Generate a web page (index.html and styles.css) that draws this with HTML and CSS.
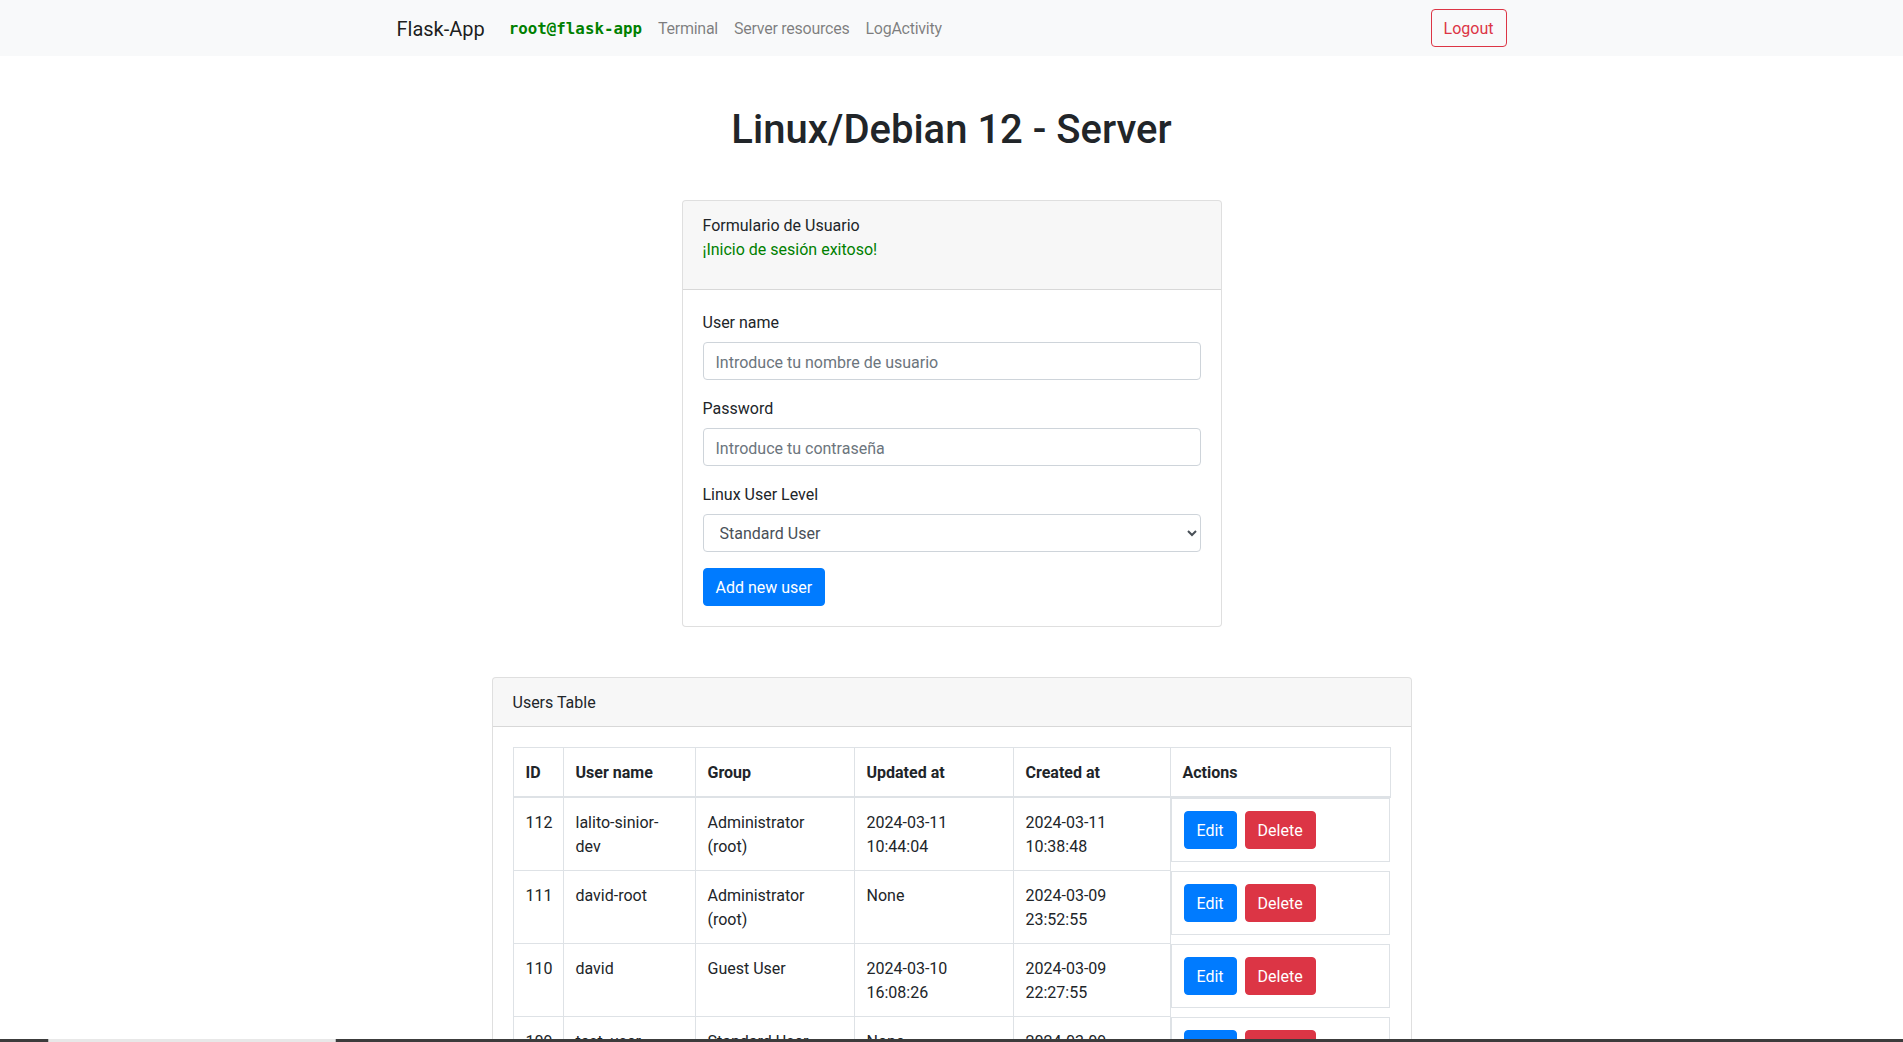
FILE: index.html
```
<!DOCTYPE html>
<html lang="es">
<head>
<meta charset="utf-8">
<title>Flask-App</title>
<link rel="stylesheet" href="styles.css">
</head>
<body>
<nav class="navbar">
  <div class="container nav-inner">
    <a class="brand" href="#">Flask-App</a>
    <ul class="nav-links">
      <li><a class="nav-link host" href="#">root@flask-app</a></li>
      <li><a class="nav-link" href="#">Terminal</a></li>
      <li><a class="nav-link" href="#">Server resources</a></li>
      <li><a class="nav-link" href="#">LogActivity</a></li>
    </ul>
    <button class="btn btn-outline-danger logout" type="button">Logout</button>
  </div>
</nav>

<main class="container">
  <h1 class="title">Linux/Debian 12 - Server</h1>

  <section class="card form-card">
    <div class="card-header">
      <div>Formulario de Usuario</div>
      <p class="success">¡Inicio de sesión exitoso!</p>
    </div>
    <div class="card-body">
      <div class="form-group">
        <label class="label">User name</label>
        <input class="form-control" type="text" placeholder="Introduce tu nombre de usuario">
      </div>
      <div class="form-group">
        <label class="label">Password</label>
        <input class="form-control" type="password" placeholder="Introduce tu contraseña">
      </div>
      <div class="form-group">
        <label class="label">Linux User Level</label>
        <select class="form-control select">
          <option>Standard User</option>
          <option>Administrator (root)</option>
          <option>Guest User</option>
        </select>
      </div>
      <button class="btn btn-primary" type="button">Add new user</button>
    </div>
  </section>

  <section class="card users-card">
    <div class="card-header">Users Table</div>
    <div class="card-body">
      <table class="table">
        <thead>
          <tr>
            <th class="c-id">ID</th>
            <th class="c-user">User name</th>
            <th class="c-group">Group</th>
            <th class="c-upd">Updated at</th>
            <th class="c-cre">Created at</th>
            <th class="c-act">Actions</th>
          </tr>
        </thead>
        <tbody>
          <tr>
            <td>112</td><td>lalito-sinior-dev</td><td>Administrator (root)</td><td>2024-03-11 10:44:04</td><td>2024-03-11 10:38:48</td>
            <td class="actions"><button class="btn btn-primary" type="button">Edit</button><button class="btn btn-danger" type="button">Delete</button></td>
          </tr>
          <tr>
            <td>111</td><td>david-root</td><td>Administrator (root)</td><td>None</td><td>2024-03-09 23:52:55</td>
            <td class="actions"><button class="btn btn-primary" type="button">Edit</button><button class="btn btn-danger" type="button">Delete</button></td>
          </tr>
          <tr>
            <td>110</td><td>david</td><td>Guest User</td><td>2024-03-10 16:08:26</td><td>2024-03-09 22:27:55</td>
            <td class="actions"><button class="btn btn-primary" type="button">Edit</button><button class="btn btn-danger" type="button">Delete</button></td>
          </tr>
          <tr>
            <td>109</td><td>test_user</td><td>Standard User</td><td>None</td><td>2024-03-09 21:14:32</td>
            <td class="actions"><button class="btn btn-primary" type="button">Edit</button><button class="btn btn-danger" type="button">Delete</button></td>
          </tr>
        </tbody>
      </table>
    </div>
  </section>
</main>

<div class="taskbar"><div class="taskbar-seg"></div></div>
</body>
</html>
```
FILE: styles.css
```
* { box-sizing: border-box; }

body {
  margin: 0;
  font-family: Roboto, "Liberation Sans", Arial, sans-serif;
  font-size: 16px;
  line-height: 1.5;
  color: #212529;
  background: #fff;
}

.container {
  max-width: 1140px;
  margin: 0 auto;
  padding: 0 15px;
}

/* navbar */
.navbar {
  background: #f8f9fa;
  padding: 8px 16px;
}
.nav-inner {
  display: flex;
  align-items: center;
}
.brand {
  font-size: 20px;
  line-height: 30px;
  padding: 6px 0 4px;
  margin-right: 16px;
  color: rgba(0, 0, 0, .9);
  text-decoration: none;
}
.nav-links {
  display: flex;
  list-style: none;
  margin: 0;
  padding: 0;
}
.nav-link {
  display: block;
  padding: 9px 8px 7px;
  color: rgba(0, 0, 0, .5);
  text-decoration: none;
  letter-spacing: -0.25px;
}
.host {
  font-family: "DejaVu Sans Mono", "Liberation Mono", monospace;
  font-weight: 700;
  font-size: 15.8px;
  letter-spacing: 0;
  color: #008000;
}
.logout { margin-left: auto; }

/* title */
.title {
  font-size: 40px;
  font-weight: 500;
  line-height: 1.2;
  text-align: center;
  margin: 50px 0 46px;
}

/* cards */
.card {
  background: #fff;
  border: 1px solid rgba(0, 0, 0, .125);
  border-radius: 4px;
}
.card-header {
  padding: 13px 20px 11px;
  background: rgba(0, 0, 0, .03);
  border-bottom: 1px solid rgba(0, 0, 0, .125);
  border-radius: 3px 3px 0 0;
}
.card-body { padding: 20px; }
.form-card { width: 540px; margin: 0 auto; }
.users-card { width: 920px; margin: 50px auto 0; }
.success {
  color: #008000;
  margin: 0 0 16px;
}

/* form */
.form-group { margin-bottom: 16px; }
.label {
  display: inline-block;
  padding-top: 1px;
  margin-bottom: 7px;
}
.form-control {
  display: block;
  width: 100%;
  height: 38px;
  padding: 7px 12px 5px;
  font-family: inherit;
  font-size: 16px;
  line-height: 1.5;
  color: #495057;
  background: #fff;
  border: 1px solid #ced4da;
  border-radius: 4px;
}
.form-control::placeholder { color: #6c757d; opacity: 1; }
.select { padding: 6px 12px; }

/* buttons */
.btn {
  display: inline-block;
  font-family: inherit;
  font-size: 16px;
  line-height: 1.5;
  padding: 7px 12px 5px;
  border: 1px solid transparent;
  border-radius: 4px;
  cursor: pointer;
}
.btn-primary { background: #007bff; border-color: #007bff; color: #fff; }
.btn-danger { background: #dc3545; border-color: #dc3545; color: #fff; }
.btn-outline-danger { background: transparent; border-color: #dc3545; color: #dc3545; }

/* table */
.table {
  width: 100%;
  border-collapse: collapse;
  table-layout: fixed;
  color: #212529;
}
.table th,
.table td {
  padding: 13px 12px 11px;
  border: 1px solid #dee2e6;
  vertical-align: top;
  text-align: left;
}
.table thead th {
  border-bottom-width: 2px;
  vertical-align: bottom;
  font-weight: 700;
}
.table td.actions { padding: 12px; }
.c-id { width: 50px; }
.c-user { width: 132px; }
.c-group { width: 159px; }
.c-upd { width: 159px; }
.c-cre { width: 157px; }
.actions {
  display: flex;
  gap: 8px;
}

/* bottom strip */
.taskbar {
  position: fixed;
  left: 0;
  right: 0;
  bottom: 0;
  height: 3px;
  background: #3c3c3c;
  display: flex;
}
.taskbar-seg {
  margin-left: 48px;
  width: 288px;
  background: #e8e8e8;
  border-left: 1px solid #bbb;
  border-right: 1px solid #bbb;
}
```
